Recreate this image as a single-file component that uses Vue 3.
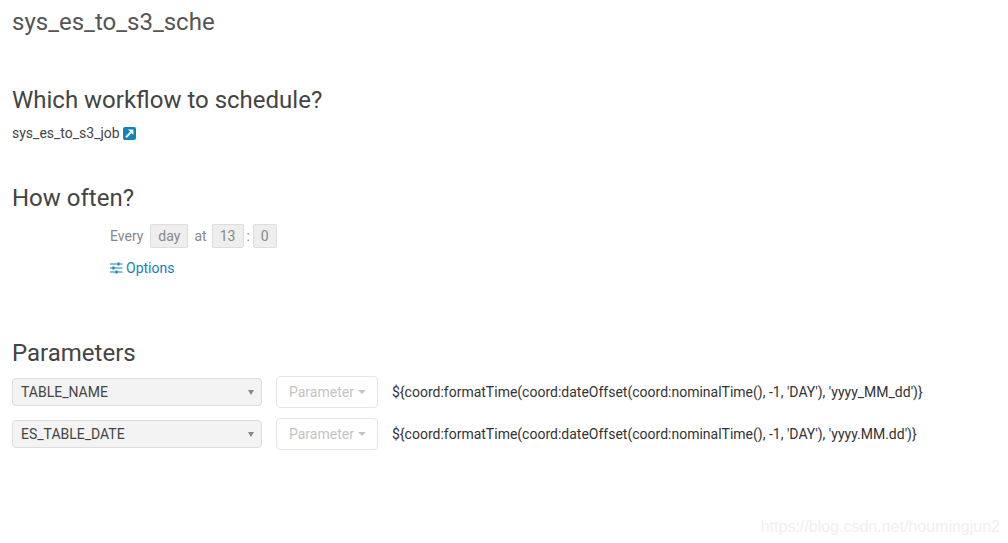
<script setup>
const params = [
  { name: 'TABLE_NAME', value: "${coord:formatTime(coord:dateOffset(coord:nominalTime(), -1, 'DAY'), 'yyyy_MM_dd')}" },
  { name: 'ES_TABLE_DATE', value: "${coord:formatTime(coord:dateOffset(coord:nominalTime(), -1, 'DAY'), 'yyyy.MM.dd')}" }
]
</script>

<template>
  <div class="page">
    <h1 class="title">sys_es_to_s3_sche</h1>

    <h2 class="h-workflow">Which workflow to schedule?</h2>
    <div class="workflow">
      <span>sys_es_to_s3_job</span>
      <svg class="ext" width="13" height="13" viewBox="0 0 13 13">
        <rect x="0" y="0" width="13" height="13" rx="2" fill="#1183b8" />
        <path d="M3 10.2 L8 5.2" stroke="#fff" stroke-width="2" fill="none" />
        <path d="M5 2.6 H10.4 V8 Z" fill="#fff" />
      </svg>
    </div>

    <h2 class="h-often">How often?</h2>
    <div class="often">
      <div class="freq">
        <span>Every</span>
        <span class="pill day">day</span>
        <span class="at">at</span>
        <span class="pill hour">13</span>
        <span class="colon">:</span>
        <span class="pill min">0</span>
      </div>
      <div class="options">
        <svg width="13" height="12" viewBox="0 0 13 12">
          <path d="M0 2 H12.5 M0 6 H12.5 M0 10 H12.5" stroke="#1183b8" stroke-width="1.2" />
          <rect x="7.5" y="0.5" width="2" height="3" fill="#1183b8" />
          <rect x="2.5" y="4.5" width="2" height="3" fill="#1183b8" />
          <rect x="5.5" y="8.5" width="2" height="3" fill="#1183b8" />
        </svg>
        <span>Options</span>
      </div>
    </div>

    <h2 class="h-params">Parameters</h2>
    <div class="rows">
      <div v-for="p in params" :key="p.name" class="row">
        <div class="select">
          <span>{{ p.name }}</span>
          <i class="sel-caret"></i>
        </div>
        <div class="param-btn">
          <span>Parameter</span>
          <i class="btn-caret"></i>
        </div>
        <div class="value">{{ p.value }}</div>
      </div>
    </div>

    <div class="watermark">https://blog.csdn.net/houmingjun2</div>
  </div>
</template>

<style>
html, body { margin: 0; background: #fff; }
</style>

<style scoped>
.page {
  position: relative;
  width: 1008px;
  height: 543px;
  overflow: hidden;
  box-sizing: border-box;
  padding: 0 12px;
  font-family: Roboto, "Liberation Sans", sans-serif;
  color: #333;
}
.title {
  margin: 0;
  padding-top: 8px;
  font-size: 24px;
  line-height: 29px;
  font-weight: 400;
  color: #555;
}
h2 {
  margin: 0;
  font-size: 24px;
  line-height: 29px;
  font-weight: 400;
  color: #444;
}
.h-workflow { margin-top: 49px; }
.workflow {
  margin-top: 9px;
  display: flex;
  align-items: center;
  gap: 3px;
  font-size: 14px;
  line-height: 18px;
  color: #444;
}
.h-often { margin-top: 42px; }
.often { padding-left: 98px; margin-top: 11px; }
.freq {
  display: flex;
  align-items: center;
  font-size: 14px;
  color: #888;
  height: 24px;
}
.pill {
  box-sizing: border-box;
  height: 24px;
  line-height: 22px;
  background: #eee;
  border: 1px solid #ddd;
  border-radius: 2px;
  text-align: center;
}
.day { width: 38px; margin-left: 7px; }
.at { margin-left: 6px; }
.hour { width: 32px; margin-left: 5px; }
.colon { width: 9px; text-align: center; }
.min { width: 24px; }
.options {
  margin-top: 12px;
  display: flex;
  align-items: center;
  gap: 3px;
  font-size: 14px;
  line-height: 16px;
  color: #1183b8;
}
.h-params { margin-top: 63px; }
.rows { margin-top: 8px; display: flex; flex-direction: column; gap: 10px; }
.row { display: flex; align-items: center; height: 32px; }
.select {
  box-sizing: border-box;
  width: 250px;
  height: 28px;
  display: flex;
  align-items: center;
  justify-content: space-between;
  padding: 0 7px 0 8px;
  background: #f3f3f3;
  border: 1px solid #ddd;
  border-radius: 4px;
  font-size: 14px;
  color: #444;
}
.sel-caret {
  width: 0; height: 0;
  border-left: 3px solid transparent;
  border-right: 3px solid transparent;
  border-top: 5px solid #888;
}
.param-btn {
  box-sizing: border-box;
  margin-left: 14px;
  width: 102px;
  height: 32px;
  display: flex;
  align-items: center;
  gap: 4px;
  padding-left: 12px;
  background: #fff;
  border: 1px solid #e6e6e6;
  border-radius: 4px;
  font-size: 14px;
  color: #c4c4c4;
}
.btn-caret {
  width: 0; height: 0;
  border-left: 4px solid transparent;
  border-right: 4px solid transparent;
  border-top: 4px solid #c4c4c4;
}
.value { margin-left: 14px; font-size: 14px; color: #333; white-space: nowrap; }
.watermark {
  position: absolute;
  right: 8px;
  bottom: 7px;
  font-family: "Liberation Sans", sans-serif;
  font-size: 16px;
  color: #efefef;
}
</style>
